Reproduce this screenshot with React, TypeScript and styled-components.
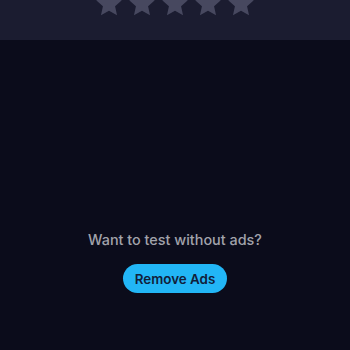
import React from 'react';
import styled, {createGlobalStyle} from 'styled-components';

const GlobalStyle = createGlobalStyle`
    html, body {
        margin: 0;
        padding: 0;
        background: #0b0c1b;
    }
    body {
        font-family: Inter, "Noto Sans", sans-serif;
    }
`;

const Page = styled.div`
    width: 350px;
    height: 350px;
    display: flex;
    flex-direction: column;
    background: #0b0c1b;
    overflow: hidden;
`;

const RatingBar = styled.div`
    height: 40px;
    background: #1b1c30;
    display: flex;
    justify-content: center;
    align-items: flex-end;
    gap: 5px;
    padding-bottom: 22px;
    box-sizing: border-box;
    overflow: hidden;
`;

const Star = styled.svg`
    width: 28px;
    height: 28px;
    flex-shrink: 0;
    fill: #47485f;
`;

const AdArea = styled.div`
    flex: 1;
    display: flex;
    flex-direction: column;
    align-items: center;
    padding-top: 191px;
    box-sizing: border-box;
`;

const Prompt = styled.div`
    font-size: 14.4px;
    font-weight: 500;
    color: #a2a3ab;
`;

const RemoveButton = styled.button`
    margin-top: 16px;
    height: 29px;
    padding: 0 12px;
    border: none;
    border-radius: 15px;
    background: #22b6f6;
    color: #11203a;
    font-family: Inter, "Noto Sans", sans-serif;
    font-size: 13.4px;
    font-weight: 600;
    cursor: pointer;
`;

const StarIcon = () => (
    <Star viewBox="0 0 24 24">
        <path d="M12 0.8l3.3 7.1 7.7.8-5.8 5.3 1.7 7.6L12 17.7l-6.9 3.9 1.7-7.6-5.8-5.3 7.7-.8z"/>
    </Star>
);

const App = () => {
    return (
        <>
            <GlobalStyle/>
            <Page>
                <RatingBar>
                    {[0, 1, 2, 3, 4].map((i) => <StarIcon key={i}/>)}
                </RatingBar>
                <AdArea>
                    <Prompt>Want to test without ads?</Prompt>
                    <RemoveButton>Remove Ads</RemoveButton>
                </AdArea>
            </Page>
        </>
    );
};

export default App;
